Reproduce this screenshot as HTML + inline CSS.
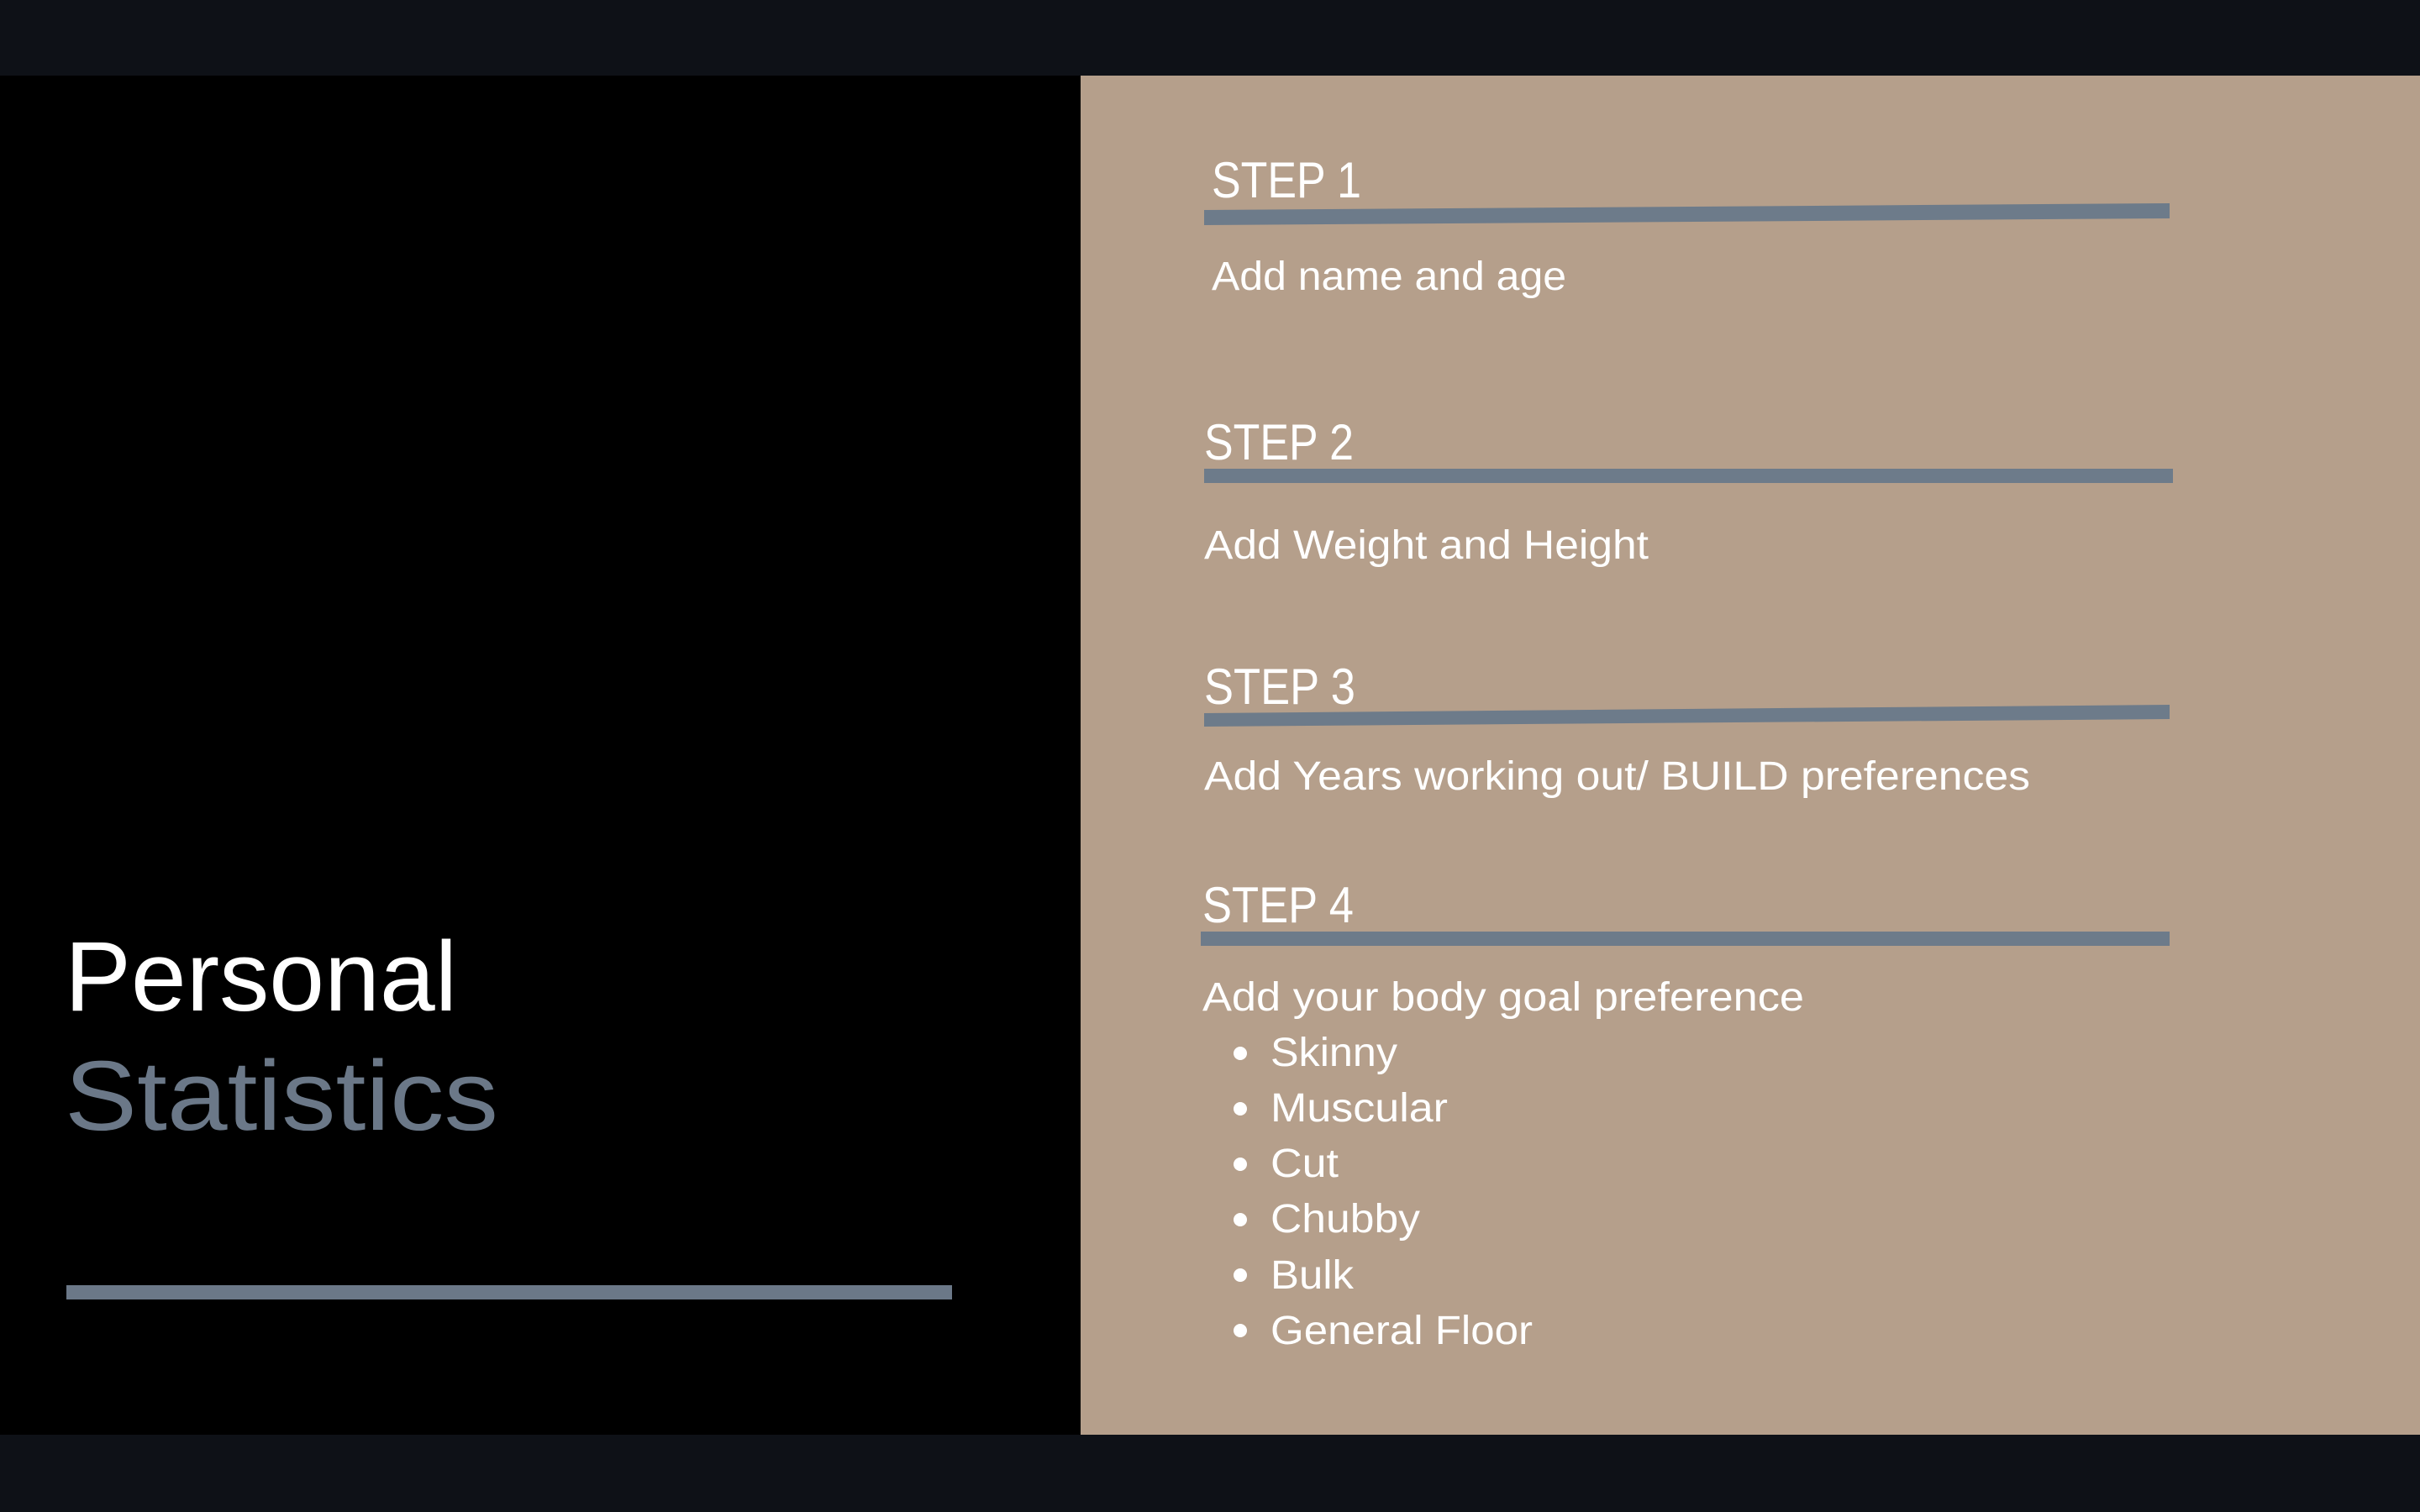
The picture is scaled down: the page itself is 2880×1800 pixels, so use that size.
<!DOCTYPE html>
<html><head><meta charset="utf-8"><style>
html,body{margin:0;padding:0;background:#0e1117;}
svg{display:block}
</style></head><body>
<svg width="2880" height="1800" viewBox="0 0 2880 1800" xmlns="http://www.w3.org/2000/svg" font-family="Liberation Sans, sans-serif">
<rect x="0" y="0" width="2880" height="1800" fill="#0e1117"/>
<rect x="0" y="90" width="1286" height="1618" fill="#000"/>
<rect x="1286" y="90" width="1594" height="1618" fill="#b59f8b"/>
<text x="77" y="1203" font-size="118" fill="#fff" textLength="467" lengthAdjust="spacingAndGlyphs">Personal</text>
<text x="77" y="1345" font-size="118" fill="#6b7888" textLength="516" lengthAdjust="spacingAndGlyphs">Statistics</text>
<rect x="79" y="1530" width="1054" height="17" fill="#6b7888"/>
<g fill="#6d7b8a">
<polygon points="1433,250 2582,242 2582,260 1433,268"/>
<rect x="1433" y="558" width="1153" height="17"/>
<polygon points="1433,849 2582,839 2582,856 1433,865"/>
<rect x="1429" y="1109" width="1153" height="17"/>
</g>
<g fill="#fff">
<text x="1442" y="235" font-size="60" textLength="178" lengthAdjust="spacingAndGlyphs">STEP 1</text>
<text x="1442" y="345" font-size="48" textLength="422" lengthAdjust="spacingAndGlyphs">Add name and age</text>
<text x="1433" y="547" font-size="60" textLength="178" lengthAdjust="spacingAndGlyphs">STEP 2</text>
<text x="1433" y="665" font-size="48" textLength="529" lengthAdjust="spacingAndGlyphs">Add Weight and Height</text>
<text x="1433" y="838" font-size="60" textLength="180" lengthAdjust="spacingAndGlyphs">STEP 3</text>
<text x="1433" y="940" font-size="48" textLength="983" lengthAdjust="spacingAndGlyphs">Add Years working out/ BUILD preferences</text>
<text x="1431" y="1098" font-size="60" textLength="180" lengthAdjust="spacingAndGlyphs">STEP 4</text>
<text x="1431" y="1203" font-size="48" textLength="716" lengthAdjust="spacingAndGlyphs">Add your body goal preference</text>
<circle cx="1476" cy="1254" r="8"/>
<text x="1512" y="1269" font-size="48" textLength="151" lengthAdjust="spacingAndGlyphs">Skinny</text>
<circle cx="1476" cy="1320" r="8"/>
<text x="1512" y="1335" font-size="48" textLength="211" lengthAdjust="spacingAndGlyphs">Muscular</text>
<circle cx="1476" cy="1386" r="8"/>
<text x="1512" y="1401" font-size="48" textLength="81" lengthAdjust="spacingAndGlyphs">Cut</text>
<circle cx="1476" cy="1452" r="8"/>
<text x="1512" y="1467" font-size="48" textLength="178" lengthAdjust="spacingAndGlyphs">Chubby</text>
<circle cx="1476" cy="1518" r="8"/>
<text x="1512" y="1534" font-size="48" textLength="99" lengthAdjust="spacingAndGlyphs">Bulk</text>
<circle cx="1476" cy="1584" r="8"/>
<text x="1512" y="1600" font-size="48" textLength="312" lengthAdjust="spacingAndGlyphs">General Floor</text>
</g>
</svg>
</body></html>
